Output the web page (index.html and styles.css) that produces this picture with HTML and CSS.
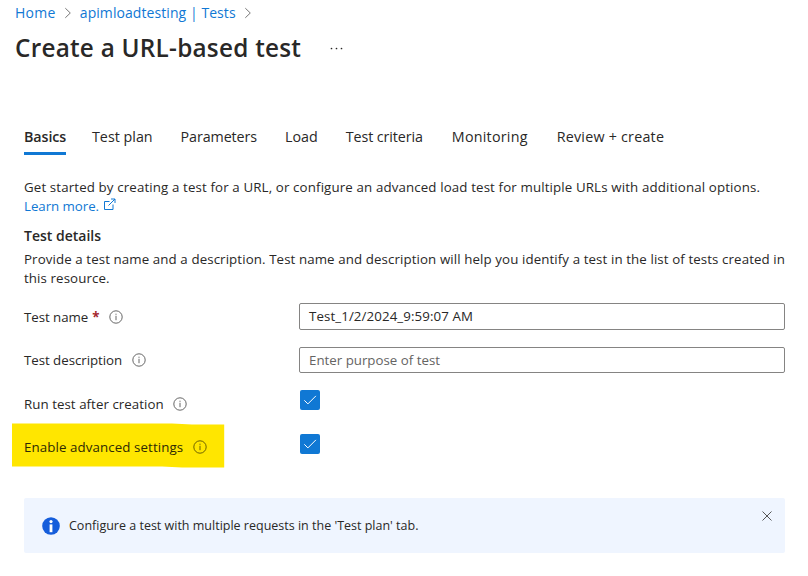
FILE: index.html
```html
<!DOCTYPE html>
<html lang="en">
<head>
<meta charset="utf-8">
<title>Create a URL-based test</title>
<link rel="stylesheet" href="styles.css">
</head>
<body>
<svg class="defs" width="0" height="0">
  <symbol id="info" viewBox="0 0 14 14"><circle cx="7" cy="7" r="6.2" fill="none" stroke="currentColor" stroke-width=".9"/><path d="M7 5.8v4.4M7 3.7v1.1" stroke="currentColor" stroke-width=".9"/></symbol>
  <symbol id="chevron" viewBox="0 0 8 12"><path d="M1.3 1.2 6.3 6l-5 4.8" fill="none" stroke="currentColor"/></symbol>
  <symbol id="check" viewBox="0 0 20 20"><path d="m4.3 10.3 3.6 3.6 8-8" fill="none" stroke="currentColor" stroke-width="1"/></symbol>
</svg>
<nav class="crumbs">
  <a class="home">Home</a>
  <svg class="chevron"><use href="#chevron"/></svg>
  <a class="resource">apimloadtesting | Tests</a>
  <svg class="chevron"><use href="#chevron"/></svg>
</nav>
<header class="heading">
  <h1>Create a URL-based test</h1>
  <svg class="more" viewBox="0 0 13 3" fill="currentColor"><circle cx="1.5" cy="1.5" r=".85"/><circle cx="6.5" cy="1.5" r=".85"/><circle cx="11.5" cy="1.5" r=".85"/></svg>
</header>
<main>
  <div class="tabs">
    <a class="tab active">Basics</a>
    <a class="tab">Test plan</a>
    <a class="tab snug">Parameters</a>
    <a class="tab">Load</a>
    <a class="tab snug">Test criteria</a>
    <a class="tab wide">Monitoring</a>
    <a class="tab wide">Review + create</a>
  </div>
  <p class="intro">Get started by creating a test for a URL, or configure an advanced load test for multiple URLs with additional options.<br><a class="learn">Learn more.</a><svg class="external" viewBox="0 0 13 13" fill="none" stroke="currentColor"><path d="M6.5 3.5h-5v8h8.5V6.5M8 1h4v4M12 1 5.5 7.5"/></svg></p>
  <h2>Test details</h2>
  <p class="details">Provide a test name and a description. Test name and description will help you identify a test in the list of tests created in<br>this resource.</p>
  <form class="form">
    <div class="row">
      <label>Test name <b class="required">*</b><svg class="info"><use href="#info"/></svg></label>
      <div class="input value">Test_1/2/2024_9:59:07 AM</div>
    </div>
    <div class="row short">
      <label>Test description<svg class="info"><use href="#info"/></svg></label>
      <div class="input placeholder">Enter purpose of test</div>
    </div>
    <div class="row">
      <label class="spaced">Run test after creation<svg class="info"><use href="#info"/></svg></label>
      <svg class="checkbox"><use href="#check"/></svg>
    </div>
    <div class="row short">
      <svg class="marker" viewBox="0 0 213 45"><path d="M0 .5h160l20 1h32.2v43H170l-20-1H0z"/></svg>
      <label class="spaced marked">Enable advanced settings<svg class="info"><use href="#info"/></svg></label>
      <svg class="checkbox"><use href="#check"/></svg>
    </div>
  </form>
  <aside class="notice">
    <svg class="notice-icon" viewBox="0 0 18 18"><circle cx="9" cy="9" r="8.8" fill="#155ddb"/><circle cx="9" cy="4.6" r="1.6" fill="#fff"/><path d="M7.6 7.4h2.8v7.8H7.6z" fill="#fff"/></svg>
    <span class="notice-text">Configure a test with multiple requests in the 'Test plan' tab.</span>
    <svg class="close" viewBox="0 0 10 10"><path d="m.5.5 9 9m0-9-9 9" stroke="currentColor" stroke-width=".9"/></svg>
  </aside>
</main>
</body>
</html>
```
FILE: styles.css
```css
* { box-sizing: border-box; }
body {
  margin: 0;
  width: 808px;
  height: 576px;
  overflow: hidden;
  background: #fff;
  color: #292827;
  font: 13.3px/19px "Open Sans", "Noto Sans", sans-serif;
}
svg { display: block; flex: none; }
.defs { position: absolute; }
h1, h2, p { margin: 0; }
a { color: #1078d4; }
.crumbs { display: flex; align-items: center; height: 25px; padding-left: 15px; font-size: 14px; }
.home { letter-spacing: .3px; }
.resource { letter-spacing: .07px; }
.chevron { width: 8px; height: 12px; color: #777; margin: 0 8px; }
.heading { display: flex; align-items: center; height: 46px; padding-left: 15px; }
h1 { font-size: 24.3px; line-height: 32px; font-weight: 600; letter-spacing: .25px; white-space: nowrap; }
.more { width: 13px; height: 3px; margin-left: 29px; }
main { padding: 52px 23px 0 24px; }
.tabs { display: flex; gap: 28px; height: 32px; font-size: 14.3px; line-height: 27px; }
.tab { color: #292827; white-space: nowrap; }
.tab.active { width: 42px; margin-right: -2px; letter-spacing: -.1px; font-weight: 600; border-bottom: 3px solid #1078d4; }
.tab.snug { letter-spacing: -.1px; }
.tab.wide { margin-left: 1px; letter-spacing: .23px; }
.intro { margin-top: 23px; letter-spacing: .13px; white-space: nowrap; }
.learn { letter-spacing: -.05px; }
.external { display: inline-block; width: 13px; height: 13px; margin-left: 4px; color: #1078d4; }
h2 { margin-top: 10px; font-size: 14px; line-height: 20px; font-weight: 600; }
.details { margin-top: 4px; letter-spacing: .1px; white-space: nowrap; }
.form { margin-top: 15px; }
.row { display: grid; grid-template-columns: 275px 1fr; height: 44px; position: relative; }
.row.short { height: 43px; }
label { display: flex; height: 28px; align-items: center; white-space: nowrap; letter-spacing: -.04px; position: relative; }
.short label { height: 26px; }
label.spaced { letter-spacing: .05px; }
label.marked { letter-spacing: .1px; color: #2e2a05; }
.required { color: #a4262c; margin-left: 4px; }
.info { width: 14px; height: 14px; margin-left: 9.5px; color: #555; }
.marked .info { color: #5c5300; }
.input { height: 27px; border: 1px solid #858483; border-radius: 2px; padding-left: 9px; line-height: 24px; }
.value { letter-spacing: .1px; }
.placeholder { height: 26px; color: #656463; }
.checkbox { width: 20px; height: 20px; margin-left: 1px; border-radius: 2px; background: #1078d4; color: #fff; }
.marker { position: absolute; left: -12px; top: -11px; width: 213px; height: 45px; fill: #ffe600; }
.notice { display: flex; align-items: center; height: 55px; margin-top: 21px; padding: 0 14px 0 18px; border-radius: 2px; background: #eff5ff; font-size: 12.5px; }
.notice-icon { width: 18px; height: 18px; margin-right: 9px; }
.close { width: 10px; height: 10px; margin: 0 -.5px 19px auto; color: #444; }
```
